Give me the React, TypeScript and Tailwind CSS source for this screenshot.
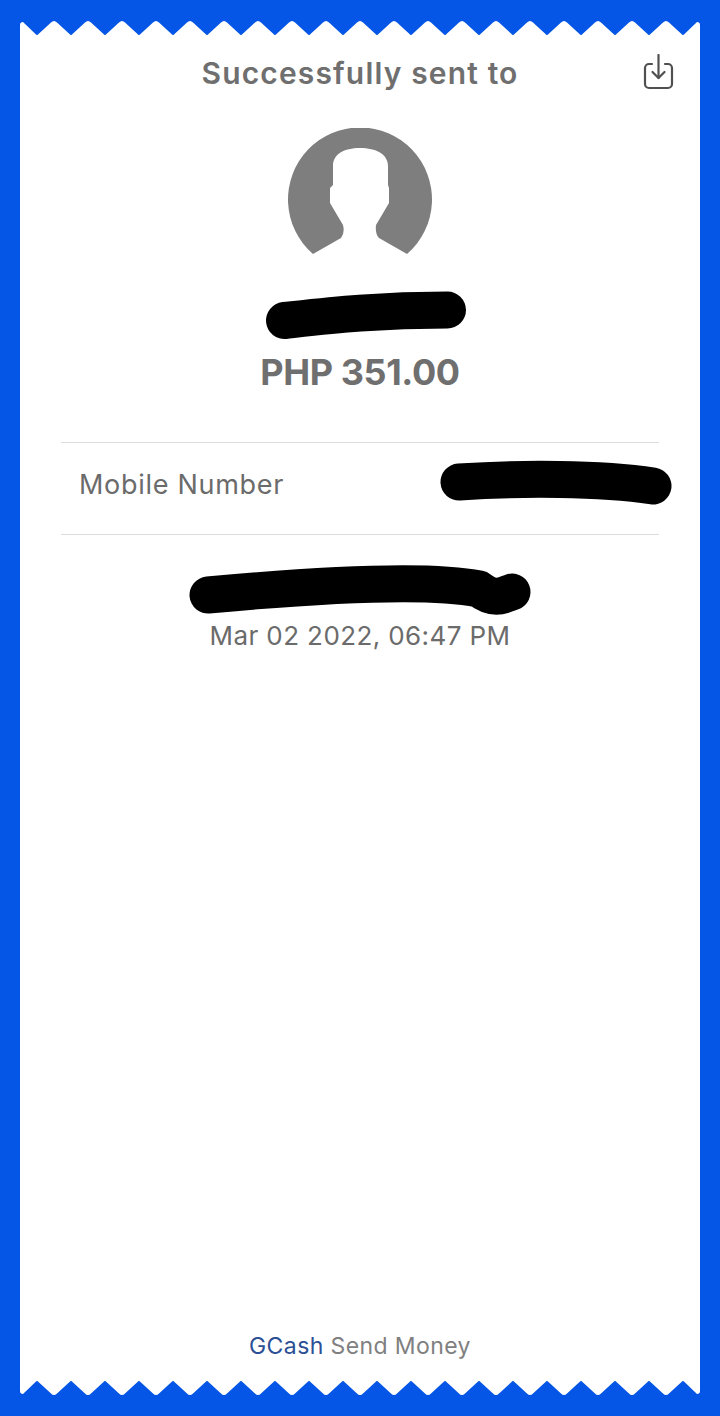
const TOOTH = 34;

// zigzag edge of the receipt, round peaks and tighter valleys
function zigzagPath(flip: boolean) {
  const y = (v: number) => (flip ? 16 - v : v);
  let d = `M0 ${y(16)} L0 ${y(5)} Q0 ${y(2)} 3 ${y(2)}`;
  for (let x = 17; x < 680; x += TOOTH) {
    // valley
    d += ` L${x - 1.5} ${y(14)} Q${x} ${y(15.8)} ${x + 1.5} ${y(14)}`;
    // peak
    if (x + 17 < 680) {
      d += ` L${x + 14} ${y(2.5)} Q${x + 17} ${y(-0.5)} ${x + 20} ${y(2.5)}`;
    }
  }
  d += ` L677 ${y(2)} Q680 ${y(2)} 680 ${y(5)} L680 ${y(16)} Z`;
  return d;
}

function Zigzag({ flip = false }: { flip?: boolean }) {
  return (
    <svg width="680" height="16" viewBox="0 0 680 16" className="block shrink-0">
      <path d={zigzagPath(flip)} fill="#ffffff" />
    </svg>
  );
}

function Scribble({ w, h, d }: { w: number; h: number; d: string }) {
  return (
    <svg width={w} height={h} viewBox={`0 0 ${w} ${h}`} className="block shrink-0 overflow-visible">
      <path d={d} fill="none" stroke="#000000" strokeWidth="37" strokeLinecap="round" strokeLinejoin="round" />
    </svg>
  );
}

export default function App() {
  return (
    <div
      className="w-[720px] h-[1416px] bg-[#0556e6] px-5 pt-5 pb-[20px] flex flex-col overflow-hidden"
      style={{ fontFamily: "Inter, 'Liberation Sans', sans-serif" }}
    >
      <Zigzag />
      <main className="flex-1 bg-white flex flex-col items-center">
        <header className="w-full grid grid-cols-[1fr_auto_1fr] items-center pt-[17px]">
          <div />
          <h1 className="text-[30px] leading-[40px] font-semibold tracking-[1.15px] text-[#6f6f6f]">Successfully sent to</h1>
          <div className="flex justify-end pr-[26px]">
            <svg width="32" height="38" viewBox="0 0 32 38" fill="none" stroke="#505050" strokeWidth="2.2" strokeLinecap="round" strokeLinejoin="round">
              <path d="M10 10H7a4 4 0 0 0-4 4v16a4 4 0 0 0 4 4h19a4 4 0 0 0 4-4V14a4 4 0 0 0-4-4h-3" />
              <path d="M16.5 1v23" />
              <path d="M10.5 18l6 6 6-6" />
            </svg>
          </div>
        </header>

        <svg width="144" height="128" viewBox="0 0 144 128" className="block mt-[35px]">
          <path
            d="M25 126A72 72 0 1 1 119 126L91 110Q87 106 88 97L101 75V60L100 57V38C100 26 88 20 72 20C56 20 45 26 45 38V57L42 60V75L55 97Q57 105 53 110Z"
            fill="#7e7e7e"
          />
        </svg>

        <div className="mt-[36px] ml-[12px]">
          <Scribble w={200} h={46} d="M18.5 28.5C60 24 110 18 181.5 18" />
        </div>
        <p className="mt-[12px] text-[36px] leading-[44px] font-bold tracking-[-0.4px] text-[#6f6f6f]">PHP 351.00</p>

        <div className="mt-[48px] w-[598px] border-y border-[#dddddd] h-[93px] pl-[18px] flex items-center justify-between">
          <span className="text-[27px] tracking-[0.7px] text-[#6b6b6b] mb-[6px]">Mobile Number</span>
          <div className="-mr-[13px] mb-[14px]">
            <Scribble w={232} h={46} d="M19 23C80 19 160 19 213 27" />
          </div>
        </div>

        <div className="mt-[30px]">
          <Scribble w={342} h={48} d="M19 30C160 17 250 16 290 24C305 36 315 30 323 27" />
        </div>
        <p className="mt-[3px] text-[26px] leading-[40px] tracking-[0.4px] text-[#6b6b6b]">Mar 02 2022, 06:47 PM</p>

        <footer className="mt-auto pb-[18px] text-[23px] leading-[32px] tracking-[0.4px]">
          <span className="text-[#2c4f95]">GCash</span> <span className="text-[#808080]">Send Money</span>
        </footer>
      </main>
      <Zigzag flip />
    </div>
  );
}
